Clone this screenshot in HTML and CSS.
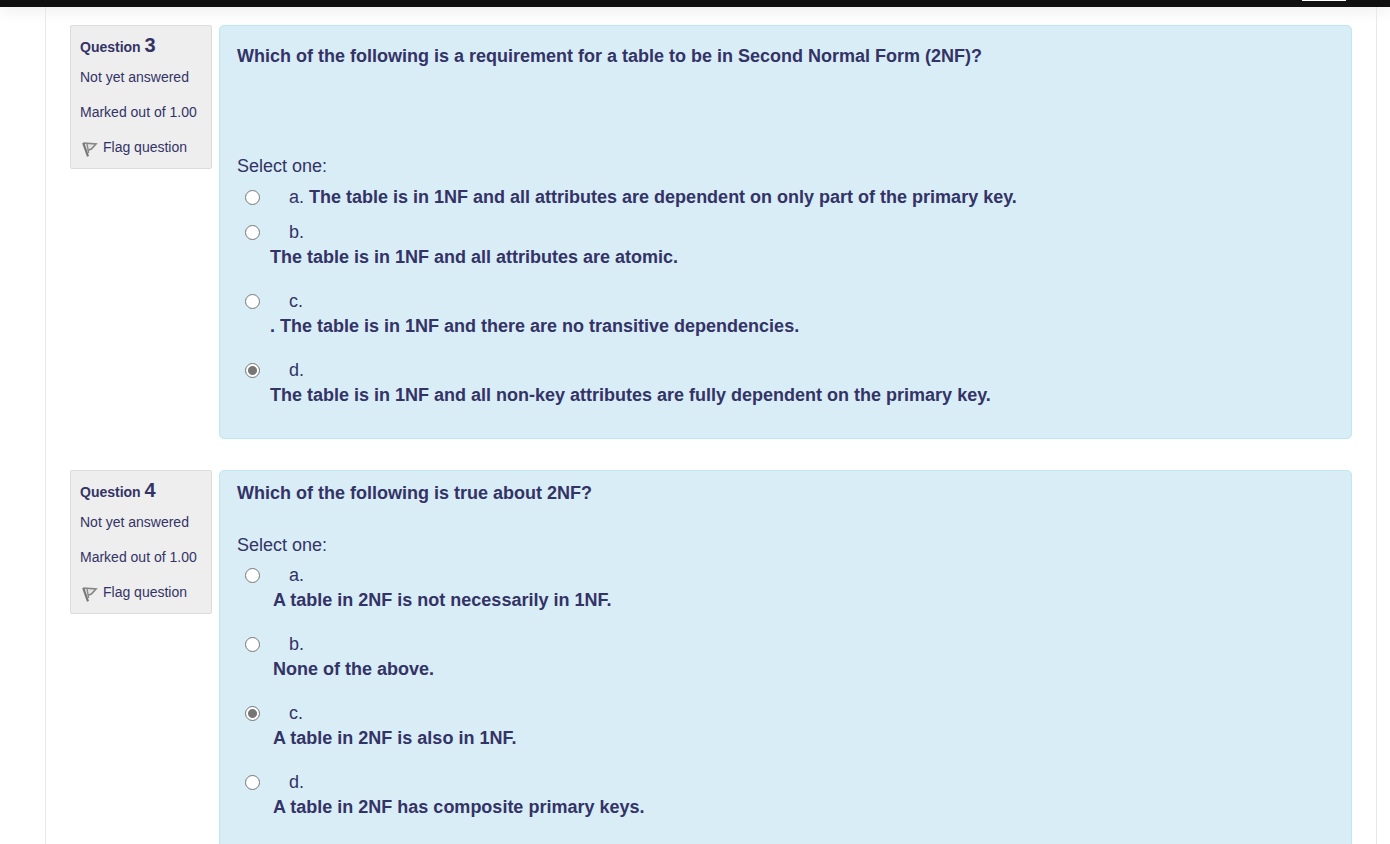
FILE: index.html
```html
<!DOCTYPE html>
<html lang="en">
<head>
<meta charset="utf-8">
<title>Quiz</title>
<link rel="stylesheet" href="styles.css">
</head>
<body>
<header class="topbar"><div class="topbar-tab"></div></header>
<main class="page">
  <section class="question">
    <aside class="info">
      <h3 class="info-title">Question <span class="info-number">3</span></h3>
      <div class="info-line">Not yet answered</div>
      <div class="info-line">Marked out of 1.00</div>
      <a class="flag" href="#">
        <svg class="flag-icon" viewBox="0 0 16 16" aria-hidden="true"><path class="flag-cloth" d="M1.4 2L14 3L9.4 8L6 9.2"/><path class="flag-pole" d="M1.2 2L6 15.4"/><path class="flag-fold" d="M5 2.6L6.6 12"/></svg>
        <span>Flag question</span>
      </a>
    </aside>
    <div class="content content-tall">
      <p class="prompt">Which of the following is a requirement for a table to be in Second Normal Form (2NF)?</p>
      <fieldset class="answers">
        <legend class="select-one">Select one:</legend>
        <div class="answer answer-short">
          <input class="radio" type="radio" name="q3" id="q3a">
          <label class="answer-label" for="q3a"><span class="letter">a.</span> <b>The table is in 1NF and all attributes are dependent on only part of the primary key.</b></label>
        </div>
        <div class="answer">
          <input class="radio" type="radio" name="q3" id="q3b">
          <label class="answer-label" for="q3b"><span class="letter">b.</span><b class="answer-text">The table is in 1NF and all attributes are atomic.</b></label>
        </div>
        <div class="answer">
          <input class="radio" type="radio" name="q3" id="q3c">
          <label class="answer-label" for="q3c"><span class="letter">c.</span><b class="answer-text">. The table is in 1NF and there are no transitive dependencies.</b></label>
        </div>
        <div class="answer">
          <input class="radio" type="radio" name="q3" id="q3d" checked>
          <label class="answer-label" for="q3d"><span class="letter">d.</span><b class="answer-text">The table is in 1NF and all non-key attributes are fully dependent on the primary key.</b></label>
        </div>
      </fieldset>
    </div>
  </section>

  <section class="question">
    <aside class="info">
      <h3 class="info-title">Question <span class="info-number">4</span></h3>
      <div class="info-line">Not yet answered</div>
      <div class="info-line">Marked out of 1.00</div>
      <a class="flag" href="#">
        <svg class="flag-icon" viewBox="0 0 16 16" aria-hidden="true"><path class="flag-cloth" d="M1.4 2L14 3L9.4 8L6 9.2"/><path class="flag-pole" d="M1.2 2L6 15.4"/><path class="flag-fold" d="M5 2.6L6.6 12"/></svg>
        <span>Flag question</span>
      </a>
    </aside>
    <div class="content content-indented">
      <p class="prompt">Which of the following is true about 2NF?</p>
      <fieldset class="answers">
        <legend class="select-one">Select one:</legend>
        <div class="answer">
          <input class="radio" type="radio" name="q4" id="q4a">
          <label class="answer-label" for="q4a"><span class="letter">a.</span><b class="answer-text">A table in 2NF is not necessarily in 1NF.</b></label>
        </div>
        <div class="answer">
          <input class="radio" type="radio" name="q4" id="q4b">
          <label class="answer-label" for="q4b"><span class="letter">b.</span><b class="answer-text">None of the above.</b></label>
        </div>
        <div class="answer">
          <input class="radio" type="radio" name="q4" id="q4c" checked>
          <label class="answer-label" for="q4c"><span class="letter">c.</span><b class="answer-text">A table in 2NF is also in 1NF.</b></label>
        </div>
        <div class="answer">
          <input class="radio" type="radio" name="q4" id="q4d">
          <label class="answer-label" for="q4d"><span class="letter">d.</span><b class="answer-text">A table in 2NF has composite primary keys.</b></label>
        </div>
      </fieldset>
    </div>
  </section>
</main>
</body>
</html>
```
FILE: styles.css
```css
* {
  box-sizing: border-box;
}

body {
  margin: 0;
  height: 100vh;
  overflow: hidden;
  background: #fff;
  color: #333366;
  font: 18px/25px "Liberation Sans", Arial, sans-serif;
}

.topbar {
  display: flex;
  justify-content: flex-end;
  height: 7px;
  padding-right: 44px;
  background: #111;
  box-shadow: 0 2px 16px rgba(0, 0, 0, 0.12);
}

.topbar-tab {
  width: 44px;
  height: 1px;
  background: #fff;
}

.page {
  display: flex;
  flex-direction: column;
  gap: 31px;
  margin: 0 13px 0 45px;
  padding: 18px 24px;
  border: solid #e8e8e8;
  border-width: 0 1px;
}

.question {
  display: flex;
  align-items: flex-start;
  gap: 7px;
}

.info {
  flex: none;
  width: 142px;
  padding: 4px 9px 11px;
  border: 1px solid #dcdcdc;
  border-radius: 2px;
  background: #eee;
  font-size: 14px;
  line-height: 20px;
}

.info-title {
  margin: 0 0 5px;
  font-size: 14px;
  line-height: 30px;
}

.info-number {
  font-size: 20px;
}

.info-line {
  margin-bottom: 15px;
}

.flag {
  display: flex;
  gap: 5px;
  padding-left: 2px;
  color: inherit;
  text-decoration: none;
}

.flag-icon {
  width: 16px;
  height: 16px;
  margin-top: 4px;
  overflow: visible;
  fill: none;
  stroke: #777;
}

.flag-cloth {
  fill: #e4e4e4;
  stroke: #858585;
  stroke-width: 1.6;
}

.flag-pole {
  stroke-width: 2.2;
}

.flag-fold {
  stroke: #8a8a8a;
  stroke-width: 1.4;
}

.content {
  flex: 1;
  min-width: 0;
  padding: 10px 17px 11px;
  border: 1px solid #bce8f1;
  border-radius: 5px;
  background: #d9edf6;
}

.prompt {
  margin: 0 0 27px;
  font-weight: bold;
}

.content-tall {
  padding-top: 18px;
}

.content-tall .prompt {
  margin-bottom: 85px;
}

.answers {
  margin: 0;
  padding: 0;
  border: 0;
}

.select-one {
  margin-bottom: 6px;
  padding: 0;
}

.content-indented .select-one {
  margin-bottom: 5px;
}

.answer {
  display: flex;
  align-items: flex-start;
  padding: 0 0 19px 8px;
}

.answer-short {
  padding-bottom: 10px;
}

.radio {
  appearance: none;
  flex: none;
  width: 15px;
  height: 15px;
  margin: 5px 10px 0 0;
  border: 1px solid #767676;
  border-radius: 50%;
  background: #fff;
}

.radio:checked {
  background: radial-gradient(circle, #767676 4px, #fff 5px);
}

.content-indented .radio {
  margin-right: 13px;
}

.letter {
  margin-left: 19px;
}

.content-indented .letter {
  margin-left: 16px;
}

.answer-text {
  display: block;
}
```
